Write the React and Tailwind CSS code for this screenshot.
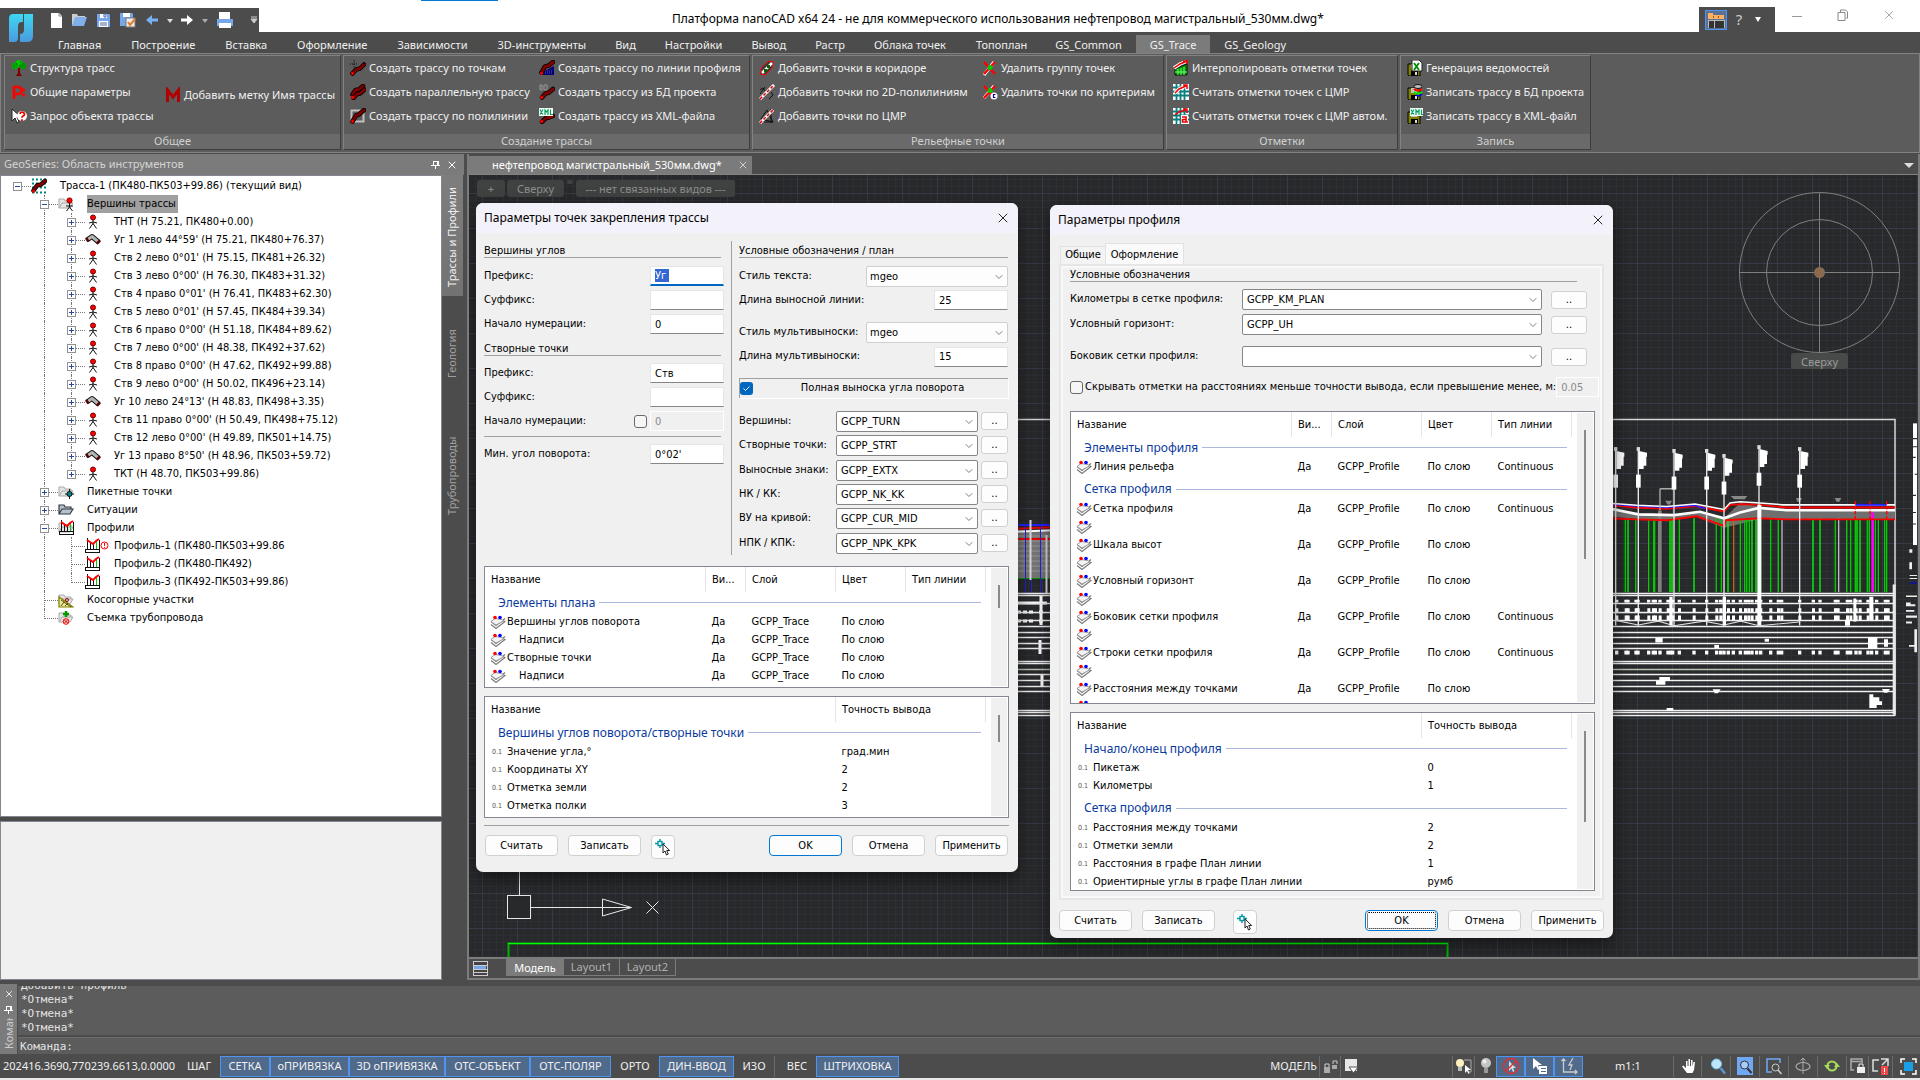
import { useState } from "react";
import { ChevronDown, X } from "lucide-react";

const uiFont = "font-['Noto_Sans','Open_Sans',sans-serif]";
const dlgFont = "font-['DejaVu_Sans_Condensed','Noto_Sans',sans-serif]";

/* ---------- icons ---------- */

function Svg({ w = 16, h = 16, className = "", children, crisp = false }) {
  return (
    <svg
      width={w}
      height={h}
      viewBox={`0 0 ${w} ${h}`}
      className={`shrink-0 ${className}`}
      fill="none"
      shapeRendering={crisp ? "crispEdges" : "auto"}
      aria-hidden="true"
    >
      {children}
    </svg>
  );
}

function Trace({ d = "M2.5 13.5 L6 9 L10 8 L13.5 4", color = "#7c0000" }) {
  return (
    <>
      <path d={d} stroke="#000" strokeWidth="4.5" strokeLinecap="round" strokeLinejoin="round" />
      <path d={d} stroke={color} strokeWidth="3" strokeLinecap="round" strokeLinejoin="round" />
      <circle cx="2.5" cy="13.5" r="1.4" fill="#f00" />
    </>
  );
}

function Floppy() {
  return (
    <>
      <path d="M1 4h12v12H2l-1-1z" fill="#808000" stroke="#000" />
      <rect x="4" y="11" width="7" height="5" fill="#000" />
      <rect x="8" y="12" width="2" height="3" fill="#ddd" />
      <rect x="4" y="4" width="6" height="5" fill="#c0c0c0" />
    </>
  );
}

const ribbonIcons = {
  tree: (
    <>
      <path d="M7 8h2v5l2 3H5l2-3z" fill="#800000" />
      <circle cx="8" cy="3.5" r="3.5" fill="#0c0" />
      <circle cx="4" cy="6" r="3.2" fill="#0a0" />
      <circle cx="12" cy="6" r="3.2" fill="#090" />
      <path d="M5 4h1M9 2h1M11 6h1M3 6h1M8 6h1" stroke="#004d00" />
    </>
  ),
  params: (
    <path d="M3 15V3h4a3 3 0 0 1 0 7H4M12.5 4.500v3M12.5 9.500v3" stroke="#f00" strokeWidth="2.6" />
  ),
  query: (
    <>
      <path d="M1 1v12l3-3 2 5 2-1-2-5h4z" fill="#fff" stroke="#222" />
      <circle cx="11" cy="8" r="5" fill="#fff" />
      <path d="M9 6a2.200 2 0 1 1 3 2c-.8.5-1 .8-1 1.800M11 11.200v1.800" stroke="#e00" strokeWidth="1.800" />
    </>
  ),
  mark: <path d="M2.5 15V3l5.500 7 5.500-7v12" stroke="#b00000" strokeWidth="3" />,
  points: (
    <>
      <Trace d="M2.500 13.500L6 9.500L10 8.500L14 4.500" />
      <path d="M4 0v8M0 4h8" stroke="#111" strokeDasharray="1 1" />
    </>
  ),
  parallel: (
    <>
      <Trace d="M2.500 10.500L5.500 6L9 5.500L13 1.800" />
      <Trace d="M3.500 14L7 10L10 9.500L14.500 5.500" />
    </>
  ),
  poly: (
    <>
      <rect x="1.500" y="2.500" width="12" height="11" stroke="#c0c0c0" strokeWidth="2" />
      <Trace d="M2.500 13.500L6 7.500L9 6.500L14 2" />
    </>
  ),
  line: (
    <>
      <path d="M1 15h14V6L2 13z" fill="#00007a" />
      <path d="M4 11h10M4 13h10" stroke="#55a" strokeDasharray="1 1" />
      <Trace d="M2.500 12.500L6 6.500L10 5.500L14 2" />
    </>
  ),
  db: (
    <>
      <path d="M1 6V1h2v5zM5 6V1h3v5z" stroke="#999" />
      <Trace d="M3 13.500L6.500 9.500L10 8.500L14 5" />
    </>
  ),
  xml: (
    <>
      <Trace d="M3 13.800L7 10L10 9.500L14 8" />
      <rect x="0" y="0" width="14" height="8" fill="#f4fff8" />
      <path d="M1 1.500l3 5M4 1.500l-3 5M6 7V2l1.500 2L9 2v5M11.500 1.500v5H14" stroke="#00a060" strokeWidth="1.200" />
    </>
  ),
  corridor: (
    <>
      <path d="M1 14l2-7 7-6 4 1-1 6-7 7z" fill="#3a3a3a" stroke="#f00" />
      <path d="M3 13L13 3" stroke="#fff" strokeWidth="2.500" />
      <path d="M5 9h3v3H5zM8 5h3v3H8z" fill="#060" />
    </>
  ),
  pline: (
    <>
      <path d="M1 6l3-2 2 3M10 15l4-4-2-3M1 10l5-7" stroke="#111" />
      <path d="M1 15L15 1" stroke="#fff" strokeWidth="3" />
      <path d="M1 15L15 1" stroke="#d00" strokeWidth="1.500" strokeDasharray="3 2" />
    </>
  ),
  dmr: (
    <>
      <path d="M2 11L8 2l6 12zM5 14h9M12 1v14" stroke="#111" />
      <path d="M1 15L14 2" stroke="#fff" strokeWidth="3" />
      <path d="M1 15L14 2" stroke="#d00" strokeWidth="1.500" strokeDasharray="3 2" />
    </>
  ),
  del: (
    <>
      <path d="M2 15L12 2" stroke="#fff" strokeWidth="3" />
      <path d="M2 2l11 12M13 2L2 14" stroke="#f00" strokeWidth="2.400" />
      <circle cx="8" cy="7.500" r="2.500" fill="#0c0" />
    </>
  ),
  delCrit: (
    <>
      <path d="M2 14L12 2" stroke="#fff" strokeWidth="3" />
      <path d="M2 2l11 12M13 2L2 14" stroke="#f00" strokeWidth="2.400" />
      <circle cx="8" cy="6.500" r="2.500" fill="#0c0" />
      <circle cx="12" cy="12" r="3.500" fill="#fff" />
      <path d="M13.500 10.500h-2v3h2" stroke="#00a" strokeWidth="1.200" />
    </>
  ),
  interp: (
    <>
      <path d="M2 15V9l12-5v11z" fill="#009a00" stroke="#111" />
      <path d="M5 9v6M8 8v7M11 7v8M2 12h12" stroke="#7f7" />
      <path d="M1 8l6-4 6-2.500" stroke="#fff" strokeWidth="3.500" />
      <path d="M1 8l6-4 7-3M10 1h4v3" stroke="#e00" strokeWidth="1.500" />
    </>
  ),
  grid: (
    <>
      <rect width="16" height="16" fill="#fff" />
      <path d="M0 3.500h16M0 7.500h16M0 11.500h16M3.500 0v16M7.500 0v16M11.500 0v16" stroke="#088080" strokeWidth="1.800" />
      <path d="M2 9l4-4 7-3M10 1h4v4" stroke="#fff" strokeWidth="3.500" />
      <path d="M2 9l4-4 7-3M10 1h4v4" stroke="#e00" strokeWidth="1.500" />
    </>
  ),
  gridAuto: (
    <>
      <rect width="16" height="16" fill="#fff" />
      <path d="M0 3.500h16M0 7.500h16M0 11.500h16M3.500 0v16M7.500 0v16M11.500 0v16" stroke="#088080" strokeWidth="1.800" />
      <path d="M2 7l4-3 7-2M10 1h4v4" stroke="#e00" strokeWidth="1.500" />
      <rect x="8" y="7" width="7" height="9" fill="#fff" />
      <path d="M9 9h4v5H9.500v-2.500H13M13 14h2" stroke="#e00" strokeWidth="1.600" />
    </>
  ),
  report: (
    <>
      <Floppy />
      <path d="M5 0h7l3 3v8H5z" fill="#fff" stroke="#222" />
      <path d="M7 3l5 7M12 3l-5 7" stroke="#080" strokeWidth="1.800" />
    </>
  ),
  toDb: (
    <>
      <Floppy />
      <ellipse cx="11" cy="2.500" rx="4" ry="2" fill="#c0c0c0" stroke="#111" />
      <path d="M7 5c2 2 6 2 8 0" stroke="#f00" strokeWidth="2" />
      <path d="M7 8c2 2 6 2 8 0" stroke="#0e0" strokeWidth="2" />
      <path d="M9 11c2 1.500 4 1 6-1" stroke="#00f" strokeWidth="1.500" />
    </>
  ),
  toXml: (
    <>
      <Floppy />
      <rect x="3" y="0" width="13" height="8" fill="#f4fff8" />
      <path d="M4 1.500l3 5M7 1.500l-3 5M9 7V2l1.500 2L12 2v5M14.500 1.500v5H16" stroke="#00a060" strokeWidth="1.200" />
    </>
  ),
};

function FolderBase() {
  return <path d="M1 12V3h5l1 2h6v2M1 12l3-5h11l-3 5z" fill="#e4e4e4" stroke="#aaa" />;
}

function ProfileGlyph({ x = 0 }) {
  return (
    <>
      <path d={`M${x + 2.5} 0v11M${x + 5.5} 5v6M${x + 8.5} 6v5`} stroke="#111" />
      <path d={`M${x + 11.5} 3v8`} stroke="#0c0" />
      <path d={`M${x} 11.500h15M${x} 14.500h15M${x + 0.5} 11v4M${x + 14.5} 2v13`} stroke="#111" />
      <path d={`M${x + 2} 2l3 2 3 2 3-3 3-2`} stroke="#f00" strokeWidth="1.800" />
    </>
  );
}

const treeIcons = {
  route: (
    <>
      <path d="M1 1.500h14M1 5.500h14M1 9.500h14M1 14.500h14" stroke="#088" strokeWidth="2" strokeDasharray="2 2" />
      <Trace d="M2.500 12.500L6 7.500L10 6.500L14 3" />
    </>
  ),
  folderPoint: (
    <>
      <FolderBase />
      <path d="M11.500 7v4M8 10h7M11.500 11l-3 4M11.500 11l3 4" stroke="#111" />
      <circle cx="11.500" cy="4.500" r="2.600" fill="#f00" stroke="#800" />
    </>
  ),
  point: (
    <>
      <path d="M8 6v4M4 9l4-1 4 1M8 9.500l-3.500 5M8 9.500l3.500 5" stroke="#111" />
      <circle cx="8" cy="3.500" r="2.500" fill="#f00" stroke="#700" />
    </>
  ),
  bend: (
    <>
      <path d="M2 8L7 4.500L14 10.500" stroke="#111" strokeWidth="5" strokeLinejoin="round" />
      <path d="M2 8L7 4.500L14 10.500" stroke="#b4b4b4" strokeWidth="3" strokeLinejoin="round" />
      <path d="M1 6l2.500 3.500M12 11.500l3-3" stroke="#500" strokeWidth="2.500" />
    </>
  ),
  folderPicket: (
    <>
      <FolderBase />
      <path d="M11.500 5v10M7 10h9" stroke="#111" />
      <circle cx="11.500" cy="10" r="2.500" fill="#088" stroke="#111" />
    </>
  ),
  folderOpen: (
    <path d="M1 12V3h5l1 2h6v2M1 12l3-5h11l-3 5z" fill="#b8c0cc" stroke="#333a45" strokeWidth="1.200" />
  ),
  profiles: (
    <>
      <FolderBase />
      <ProfileGlyph x={1} />
    </>
  ),
  profile: <ProfileGlyph />,
  slope: (
    <>
      <FolderBase />
      <path d="M1 5v10h14z" fill="#e8e8a0" stroke="#808000" strokeWidth="1.200" />
      <path d="M3 8l10 7M3 14l3-4M7 14l3-3" stroke="#550" />
      <circle cx="9" cy="8" r="1.500" stroke="#900" />
    </>
  ),
  survey: (
    <>
      <FolderBase />
      <path d="M8 1v6M5 4h6" stroke="#090" strokeWidth="2.500" />
      <circle cx="8" cy="11.500" r="2.800" stroke="#f00" />
      <path d="M6 9.500l4 4M10 9.500l-4 4" stroke="#f00" />
    </>
  ),
};

function LayersIcon() {
  return (
    <Svg w={16} h={14}>
      <path d="M1 9.500l5 4 9-7-2-1M1 6.500l5 4 9-7" stroke="#777" strokeWidth="1.100" />
      <path d="M1 6.500l4-3 7 1 1.500 1.500L6 10z" fill="#f4f4f4" stroke="#999" />
      <circle cx="5" cy="2.500" r="1.800" fill="#f00" />
      <circle cx="10" cy="2.500" r="1.800" fill="#00f" />
    </Svg>
  );
}

function PickIcon() {
  return (
    <Svg w={18} h={18}>
      <path d="M1 5.500h3M8 5.500h3M6 1v3M6 7v3" stroke="#0097a7" strokeWidth="1.400" />
      <rect x="4" y="3.500" width="4" height="4" stroke="#0097a7" strokeWidth="1.400" />
      <path d="M9 6v9l2-2 1.500 4 1.800-1-1.600-3.500h3z" fill="#fff" stroke="#222" />
    </Svg>
  );
}

/* ---------- title bar and ribbon ---------- */

function TitleBar() {
  return (
    <header className="flex h-8 items-stretch bg-white">
      <div className="flex h-6 w-[259px] shrink-0 items-center self-end bg-[#4c4c4c]">
        <svg width="26" height="30" viewBox="0 0 26 30" className="relative top-2 ml-2 shrink-0" aria-hidden="true">
          <defs>
            <linearGradient id="logo" x1="0" y1="0" x2="0" y2="1">
              <stop offset="0" stopColor="#3fd8f2" />
              <stop offset="1" stopColor="#4a9ade" />
            </linearGradient>
          </defs>
          <path d="M5 1h10v8h-1q-4 0-4 4v12q0 4-4 4H1V6q0-5 4-5z" fill="url(#logo)" />
          <path d="M16 1h9v22q0 6-6 6h-7v-8q4 0 4-4z" fill="url(#logo)" />
        </svg>
        <div className="ml-4 flex items-center gap-2">
          <Svg w={13} h={17}>
            <path d="M1 1h8l3 3v12H1z" fill="#fff" />
            <path d="M9 1v3h3" stroke="#888" />
          </Svg>
          <Svg w={17} h={14}>
            <path d="M1 12V1h5l1 2h7v2" fill="#ccc" />
            <path d="M1 13L4 4h12l-3 9z" fill="#7fb0ea" />
          </Svg>
          <Svg w={15} h={15}>
            <path d="M1 1h12l1 1v12H1z" fill="#77a7ea" />
            <path d="M4 1h7v4H4zM3 8h9v6H3z" fill="#fff" />
            <path d="M8 1h2v3H8zM4 10h7M4 12h7" stroke="#4c6a9a" />
          </Svg>
          <Svg w={17} h={16}>
            <path d="M1 1h12l1 1v12H1z" fill="#77a7ea" />
            <path d="M4 1h7v4H4z" fill="#fff" />
            <rect x="7" y="6" width="9" height="9" fill="#eee" stroke="#777" />
            <path d="M9 10l2 3 5-6" stroke="#e08030" strokeWidth="2" />
          </Svg>
        </div>
        <div className="ml-[10px] flex items-center gap-2">
          <Svg w={13} h={12}>
            <path d="M0 6l6-5v3.500h6v3H6V11z" fill="#77b0f5" />
          </Svg>
          <Svg w={6} h={5}>
            <path d="M0 1h6L3 5z" fill="#ddd" />
          </Svg>
          <Svg w={13} h={12}>
            <path d="M12 6L6 1v3.500H0v3h6V11z" fill="#fff" />
          </Svg>
          <Svg w={6} h={5}>
            <path d="M0 1h6L3 5z" fill="#aaa" />
          </Svg>
          <Svg w={18} h={17}>
            <path d="M3 0h11v7H3z" fill="#fff" />
            <path d="M1 7h16v7H1z" fill="#77a7ea" />
            <path d="M3 11h12v5H3z" fill="#fff" />
          </Svg>
        </div>
        <Svg w={8} h={8} className="mr-px ml-auto">
          <path d="M1 1h6M1 3l3 4 3-4z" stroke="#ccc" fill="#ccc" />
        </Svg>
      </div>
      <div className="flex-1">
        <div className="ml-[162px] h-px w-[77px] bg-[#0078d7]" />
        <h1 className="pt-[8px] pl-[413px] text-[12px] leading-[20px] whitespace-nowrap text-black">
          Платформа nanoCAD x64 24 - не для коммерческого использования нефтепровод магистральный_530мм.dwg*
        </h1>
      </div>
      <div className="mr-[4px] flex h-[25px] w-[76px] items-center self-end bg-[#4c4c4c] pl-[6px]">
        <button className="flex h-5 w-[22px] items-center justify-center border border-[#4f94ee] bg-[#5a7194]" aria-label="Лента">
          <Svg w={18} h={16} crisp>
            <path d="M1 1h5v2H1zM1 3h16v4H1z" fill="#ffb060" />
            <path d="M6 4v2M11 4v2" stroke="#8a5a20" />
            <path d="M1 8h16v8H1z" fill="#333" stroke="#bbb" />
            <path d="M7 8v8" stroke="#bbb" />
          </Svg>
        </button>
        <button className="ml-[6px] w-3 text-[15px] text-[#ccc]">?</button>
        <Svg w={6} h={5} className="ml-[10px]">
          <path d="M0 0h6L3 5z" fill="#fff" />
        </Svg>
      </div>
      <div className="flex w-[141px] items-start justify-between pt-[8px] pr-[24px] pl-[13px] text-[#999]">
        <button className="flex h-4 w-3 items-center" aria-label="Свернуть">
          <span className="h-px w-[10px] bg-[#999]" />
        </button>
        <button className="pt-[1px]" aria-label="Развернуть">
          <Svg w={12} h={12}>
            <path d="M1 3.500h7v8H1zM3.500 3V1h5l2 2v6H9" stroke="#888" />
          </Svg>
        </button>
        <button aria-label="Закрыть">
          <X size={14} strokeWidth={1.5} />
        </button>
      </div>
    </header>
  );
}

const menu = [
  ["Главная", "ml-[43px] px-[15px]"],
  ["Построение", "px-[15px]"],
  ["Вставка", "px-[15px]"],
  ["Оформление", "px-[15px]"],
  ["Зависимости", "px-[15px]"],
  ["3D-инструменты", "px-[15px]"],
  ["Вид", "px-[14px]"],
  ["Настройки", "pl-[15px] pr-[14px]"],
  ["Вывод", "pl-[15px] pr-[14px]"],
  ["Растр", "pl-[15px] pr-[14px]"],
  ["Облака точек", "px-[15px]"],
  ["Топоплан", "pl-[15px] pr-[14px]"],
  ["GS_Common", "px-[14px]"],
  ["GS_Trace", "px-[14px]"],
  ["GS_Geology", "px-[14px]"],
];

function MenuTabs() {
  const [active, setActive] = useState("GS_Trace");
  return (
    <nav className="flex h-[22px] items-end bg-[#4c4c4c]">
      {menu.map(([name, pad]) => (
        <button
          key={name}
          onClick={() => setActive(name)}
          className={`h-[19px] text-[11px] leading-[17px] whitespace-nowrap text-[#f0f0f0] ${pad} ${
            active === name ? "bg-[#7b7b7b]" : ""
          }`}
        >
          {name}
        </button>
      ))}
    </nav>
  );
}

const ribbon = [
  {
    title: "Общее",
    width: "w-[337px]",
    cols: [
      { w: "w-[154px]", items: [["tree", "Структура трасс"], ["params", "Общие параметры"], ["query", "Запрос объекта трассы"]] },
      { w: "flex-1", items: [["mark", "Добавить метку Имя трассы"]], center: true },
    ],
  },
  {
    title: "Создание трассы",
    width: "w-[407px]",
    cols: [
      { w: "w-[189px]", items: [["points", "Создать трассу по точкам"], ["parallel", "Создать параллельную трассу"], ["poly", "Создать трассу по полилинии"]] },
      { w: "flex-1", items: [["line", "Создать трассу по линии профиля"], ["db", "Создать трассу из БД проекта"], ["xml", "Создать трассу из XML-файла"]] },
    ],
  },
  {
    title: "Рельефные точки",
    width: "w-[412px]",
    cols: [
      { w: "w-[223px]", items: [["corridor", "Добавить точки в коридоре"], ["pline", "Добавить точки по 2D-полилиниям"], ["dmr", "Добавить точки по ЦМР"]] },
      { w: "flex-1", items: [["del", "Удалить группу точек"], ["delCrit", "Удалить точки по критериям"]] },
    ],
  },
  {
    title: "Отметки",
    width: "w-[232px]",
    cols: [
      { w: "flex-1", items: [["interp", "Интерполировать отметки точек"], ["grid", "Считать отметки точек с ЦМР"], ["gridAuto", "Считать отметки точек с ЦМР автом."]] },
    ],
  },
  {
    title: "Запись",
    width: "w-[191px]",
    cols: [
      { w: "flex-1", items: [["report", "Генерация ведомостей"], ["toDb", "Записать трассу в БД проекта"], ["toXml", "Записать трассу в XML-файл"]] },
    ],
  },
];

function Ribbon() {
  return (
    <div className="flex h-[100px] gap-[2px] border border-[#828282] bg-[#5c5c5c] px-[3px] pt-[1px]">
      {ribbon.map((g) => (
        <section
          key={g.title}
          className={`flex h-[95px] shrink-0 flex-col border border-t-[#828282] border-r-[#3c3c3c] border-b-[#3c3c3c] border-l-[#828282] ${g.width}`}
        >
          <div className="flex flex-1 pl-[6px]">
            {g.cols.map((c, i) => (
              <div key={i} className={`flex shrink-0 flex-col ${c.w} ${c.center ? "pt-[27px]" : ""}`}>
                {c.items.map(([icon, label]) => (
                  <button key={label} className="flex h-6 items-center gap-[3px] text-[11px] whitespace-nowrap text-[#f0f0f0]">
                    <Svg>{ribbonIcons[icon]}</Svg>
                    {label}
                  </button>
                ))}
              </div>
            ))}
          </div>
          <div className="h-[15px] bg-[#6a6a6a] text-center text-[11px] leading-[14px] text-[#d0d0d0]">{g.title}</div>
        </section>
      ))}
    </div>
  );
}

/* ---------- tree panel ---------- */

// guides: one letter per column, " " empty, "|" line, "+" branch, "L" last branch
const tree = [
  { g: ".", box: "-", icon: "route", text: "Трасса-1 (ПК480-ПК503+99.86) (текущий вид)" },
  { g: " +", box: "-", icon: "folderPoint", text: "Вершины трассы", selected: true },
  { g: " |+", box: "+", icon: "point", text: "ТНТ (H 75.21, ПК480+0.00)" },
  { g: " |+", box: "+", icon: "bend", text: "Уг 1 лево 44°59' (H 75.21, ПК480+76.37)" },
  { g: " |+", box: "+", icon: "point", text: "Ств 2 лево 0°01' (H 75.15, ПК481+26.32)" },
  { g: " |+", box: "+", icon: "point", text: "Ств 3 лево 0°00' (H 76.30, ПК483+31.32)" },
  { g: " |+", box: "+", icon: "point", text: "Ств 4 право 0°01' (H 76.41, ПК483+62.30)" },
  { g: " |+", box: "+", icon: "point", text: "Ств 5 лево 0°01' (H 57.45, ПК484+39.34)" },
  { g: " |+", box: "+", icon: "point", text: "Ств 6 право 0°00' (H 51.18, ПК484+89.62)" },
  { g: " |+", box: "+", icon: "point", text: "Ств 7 лево 0°00' (H 48.38, ПК492+37.62)" },
  { g: " |+", box: "+", icon: "point", text: "Ств 8 право 0°00' (H 47.62, ПК492+99.88)" },
  { g: " |+", box: "+", icon: "point", text: "Ств 9 лево 0°00' (H 50.02, ПК496+23.14)" },
  { g: " |+", box: "+", icon: "bend", text: "Уг 10 лево 24°13' (H 48.83, ПК498+3.35)" },
  { g: " |+", box: "+", icon: "point", text: "Ств 11 право 0°00' (H 50.49, ПК498+75.12)" },
  { g: " |+", box: "+", icon: "point", text: "Ств 12 лево 0°00' (H 49.89, ПК501+14.75)" },
  { g: " |+", box: "+", icon: "bend", text: "Уг 13 право 8°50' (H 48.96, ПК503+59.72)" },
  { g: " |L", box: "+", icon: "point", text: "ТКТ (H 48.70, ПК503+99.86)" },
  { g: " +", box: "+", icon: "folderPicket", text: "Пикетные точки" },
  { g: " +", box: "+", icon: "folderOpen", text: "Ситуации" },
  { g: " +", box: "-", icon: "profiles", text: "Профили" },
  { g: " |+", icon: "profile", text: "Профиль-1 (ПК480-ПК503+99.86", alert: true },
  { g: " |+", icon: "profile", text: "Профиль-2 (ПК480-ПК492)" },
  { g: " |L", icon: "profile", text: "Профиль-3 (ПК492-ПК503+99.86)" },
  { g: " +", icon: "slope", text: "Косогорные участки" },
  { g: " L", icon: "survey", text: "Съемка трубопровода" },
];

function GuideCell({ kind, box }) {
  return (
    <span className="relative h-[18px] w-[27px] shrink-0">
      {(kind === "|" || kind === "+") && (
        <span className="absolute top-0 left-[13px] h-full border-l border-dotted border-[#777]" />
      )}
      {kind === "L" && <span className="absolute top-0 left-[13px] h-[10px] border-l border-dotted border-[#777]" />}
      {kind !== "|" && kind !== " " && (
        <span className="absolute top-[9px] left-[13px] w-[14px] border-t border-dotted border-[#777]" />
      )}
      {box && (
        <span className="absolute top-[5px] left-[9px] flex size-[9px] items-center justify-center border border-[#919191] bg-white">
          <span className="absolute h-px w-[5px] bg-[#274a9a]" />
          {box === "+" && <span className="absolute h-[5px] w-px bg-[#274a9a]" />}
        </span>
      )}
    </span>
  );
}

function TreeRow({ row }) {
  const last = row.g.length - 1;
  return (
    <li className="flex h-[18px] items-center pl-[3px]">
      {[...row.g].map((k, i) => (
        <GuideCell key={i} kind={k} box={i === last ? row.box : null} />
      ))}
      <span className="relative flex w-[29px] shrink-0">
        <Svg>{treeIcons[row.icon]}</Svg>
        {row.alert && (
          <Svg w={9} h={9} className="absolute top-[3px] left-[15px]">
            <circle cx="4.500" cy="4.500" r="3.500" stroke="#f00" />
            <path d="M4.500 2v3M4.500 6v1" stroke="#f00" />
          </Svg>
        )}
      </span>
      <span className={`h-[18px] leading-[18px] whitespace-nowrap ${row.selected ? "bg-[#a0a0a0] pr-[2px]" : ""}`}>
        {row.text}
      </span>
    </li>
  );
}

function PinIcon({ color = "#fff" }) {
  return (
    <Svg w={9} h={9} crisp>
      <path d="M2 1h5v4H2zM6 1v4M0 5h9M4 5v4" stroke={color} strokeWidth="1" />
    </Svg>
  );
}

const sideTabs = [
  ["Трассы и Профили", "h-[121px] pb-[4px] bg-gradient-to-b from-[#727272] to-[#7e7e7e] text-[#eee]"],
  ["Геология", "h-[116px] text-[#a0a0a0]"],
  ["Трубопроводы", "h-[128px] text-[#a0a0a0]"],
];

function ToolPanel() {
  return (
    <aside className="flex w-[464px] shrink-0 flex-col bg-[#4c4c4c]">
      <div className="flex h-[21px] items-center bg-[#7b7b7b] pl-1 text-[11px] text-[#d4d4d4]">
        <span className="flex-1">GeoSeries: Область инструментов</span>
        <PinIcon />
        <button className="mx-[6px] text-white" aria-label="Закрыть панель">
          <X size={12} strokeWidth={2} />
        </button>
      </div>
      <div className="flex flex-1">
        <div className="flex w-[442px] flex-col gap-[4px]">
          <ul className={`flex-1 border border-[#828790] bg-white pt-px text-[11px] text-black ${dlgFont}`}>
            {tree.map((row) => (
              <TreeRow key={row.text} row={row} />
            ))}
          </ul>
          <div className="h-[159px] border border-[#828790] bg-[#f0f0f0]" />
        </div>
        <div className="flex w-[21px] flex-col">
          {sideTabs.map(([t, cls]) => (
            <button
              key={t}
              className={`flex w-[21px] rotate-180 items-center justify-center text-[11px] whitespace-nowrap [writing-mode:vertical-rl] ${cls}`}
            >
              {t}
            </button>
          ))}
        </div>
      </div>
    </aside>
  );
}

/* ---------- drawing ---------- */

const tableLines = [594, 596, 604, 613, 621, 627, 633, 638, 644, 649, 662, 664, 670, 675, 681, 687, 692, 711, 713, 716];
const poles = [
  [47, 785], [115, 785], [222, 790], [320, 790], [372, 803], [477, 780], [599, 785],
];
const greens = [76, 84, 107, 146, 161, 164, 210, 216, 238, 282, 349, 364, 384, 421, 434, 440, 448, 456, 468, 482, 512, 535, 639, 660, 706, 740, 752, 766, 771, 780, 802, 808, 826, 835, 854, 860];
const ticks = [50, 78, 84, 108, 114, 146, 160, 166, 180, 204, 212, 218, 238, 282, 320, 350, 362, 372, 385, 400, 421, 436, 446, 456, 470, 482, 512, 535, 545, 599, 640, 660, 706, 714, 742, 752, 768, 780, 804, 815, 830, 856, 864];

function ProfileDrawing() {
  return (
    <svg x="1131" y="-26" width="320" height="600" viewBox="0 0 960 1568" preserveAspectRatio="none">
      <path d="M20 940L120 955L230 960L290 945L372 965L420 925L480 935L560 945H885V967H480L372 990L290 962L180 972L20 960z" fill="#6f6f6f" />
      {greens.map((x) => (
        <rect key={x} x={x - 2} y="965" width="4" height="193" fill={x % 3 ? "#0c0" : "#00ff00"} />
      ))}
      <rect x="174" y="945" width="11" height="213" fill="#808080" />
      <rect x="399" y="965" width="4" height="193" fill="#b86a10" />
      <rect x="544" y="965" width="4" height="193" fill="#bbb" />
      <rect x="714" y="965" width="4" height="193" fill="#bbb" />
      <rect x="814" y="950" width="8" height="208" fill="#f0f" />
      <path d="M20 965L110 968L200 970L290 960L372 985L378 970L480 965L560 968H885" stroke="#f00" strokeWidth="5" fill="none" />
      <path d="M20 930L110 937L200 940L285 933L372 947L390 930L430 928L480 930L560 937H885" stroke="#f00" strokeWidth="5" fill="none" />
      <path d="M20 928L110 933L200 937L280 931L320 940" stroke="#22f" strokeWidth="4" fill="none" />
      <path d="M20 925L110 931L200 934L285 928L372 942L390 925L420 922L480 925L550 930H885" stroke="#fff" strokeWidth="4" fill="none" />
      <path d="M766 930H860" stroke="#22f" strokeWidth="5" />
      <path d="M20 938L115 955L222 957L300 948L372 965L420 950L477 938L560 944H885" stroke="#fff" strokeWidth="7" fill="none" />
      <path d="M766 920v50M810 920v50M860 920v50" stroke="#f00" strokeWidth="4" strokeDasharray="9 4" />
      <path d="M196 919h20l-6 10h-8zM392 907h50l-8 8h-32zM588 912h18l-6 10h-8zM704 912h20l-6 10h-8z" fill="#888" />
      <path d="M180 888H222M180 888v57" stroke="#aaa" strokeWidth="4" />
      {poles.map(([x, y]) => (
        <g key={x}>
          <rect x={x - 2} y={y} width="4" height={1245 - y} fill="#e8e8e8" />
          <path d={`M${x - 5} ${y - 6}h10v10h-10z`} fill="#ddd" />
          <path d={`M${x + 2} ${y + 4}l24 5v10h-2v24h-8v8h-14z`} fill="#fff" />
          <rect x={x - 7} y={y + 66} width="14" height="34" fill="#fff" />
        </g>
      ))}
      <rect x="472" y="930" width="12" height="315" fill="#fff" />
      {ticks.map((x) => (
        <g key={x} fill="#fff">
          <rect x={x - 5} y="1178" width="10" height="7" />
          <rect x={x - 4} y="1200" width="9" height="10" />
          <rect x={x - 4} y="1219" width="9" height="12" />
          <rect x={x - 5} y="1311" width="10" height="10" />
        </g>
      ))}
      <path d="M47 1232l68 12 60-10 47 12 90-12 60 10 50-10 55 12 120-10" stroke="#ddd" strokeWidth="3" fill="none" />
      <path d="M208 1170h10v75h-10zM368 1170h10v75h-10zM760 1175h9v60h-9zM808 1170h12v60h-12zM166 1278h22v12h-22zM343 1296h14v8h-14zM494 1280h13v8h-13zM804 1276h28v30h-28zM852 1281h12v20h-12zM178 1380h32v10h-14v10h-28v-10h10zM338 1412h24l-8 10h-10zM200 1461h20v8h-20zM808 1425h12v8h18v10h8v10h-16v8h-22zM846 1411h24l-8 10h-10zM735 1230h15v16h-15z" fill="#fff" />
      <rect x="878" y="1138" width="9" height="340" fill="#e8e8e8" />
      <path d="M939 717h12v318h-12z" fill="#fff" />
      <path d="M939 757h12M939 778h12M939 806h8M944 850h8M939 905h9M939 950h9M939 980h9" stroke="#2c2d30" strokeWidth="3" />
      <path d="M928 1046h9v9h-9zM928 1080h8v18h-8zM929 1113h22v3h-22zM929 1121h22v3h-22zM918 1167h33v4h-33zM918 1185h14v5h14v5h-28zM918 1205h25v4h-25zM918 1219h33v6h-33zM918 1235h18v5h-18zM943 1255h8v60h-8zM927 1296h18v5h-18z" fill="#eee" />
      <path d="M928 1134h23" stroke="#11a" strokeWidth="4" />
    </svg>
  );
}

function DrawingCanvas() {
  return (
    <svg className="absolute inset-0 h-full w-full" aria-hidden="true" fill="none">
      <defs>
        <pattern id="minor" width="7" height="7" patternUnits="userSpaceOnUse">
          <path d="M0.500 0v7M0 0.500h7" stroke="#2d2f34" />
        </pattern>
        <pattern id="major" width="35" height="35" x="13" y="18" patternUnits="userSpaceOnUse">
          <rect width="35" height="35" fill="url(#minor)" />
          <path d="M0.500 0v35M0 0.500h35" stroke="#363946" />
        </pattern>
      </defs>
      <rect width="100%" height="100%" fill="#28292b" />
      <rect width="100%" height="100%" fill="url(#major)" />

      {/* view cube */}
      <g stroke="#7f7f7f">
        <circle cx="1350.500" cy="97.500" r="80" />
        <circle cx="1350.500" cy="97.500" r="53" />
        <path d="M1270 97.500h161M1350.500 18v160" />
      </g>
      <circle cx="1350.500" cy="97.500" r="5.500" fill="#8b6b4f" />

      {/* sheet frame and table */}
      <path d="M400 244.500H1426V541" stroke="#d8d8d8" strokeWidth="1.500" />
      <rect x="540" y="355" width="50" height="48" fill="#777" />
      <path d="M540 361h50M540 366h50M540 371h50M540 376h50M540 381h50M540 386h50M540 391h50M540 396h50" stroke="#999" />
      <path d="M540 350h50" stroke="#22f" strokeWidth="2" />
      <path d="M540 354l50-2M540 364h50" stroke="#e00" strokeWidth="2" />
      <path d="M540 357l50-2" stroke="#fff" strokeWidth="2" />
      <path d="M540 403.500h50" stroke="#090" />
      <path d="M556.500 350v68M562.500 403v15M571.500 350v68" stroke="#22d" />
      <path d="M561.500 345v60M577.500 360v58" stroke="#ddd" strokeWidth="2" />
      <path d="M548 428h30M548 437h4M554 437h4M560 437h4M570 437h4M548 446h4M554 446h4M560 446h4M570 446h4M571 465v14M573 500v12M572 420v30" stroke="#fff" strokeWidth="3" />
      {tableLines.map((y) => (
        <path key={y} d={`M400 ${y - 175.5}H1426`} stroke={y === 670 ? "#b8c4b4" : "#f0f0f0"} strokeWidth="1.500" />
      ))}
      <ProfileDrawing />

      {/* coordinate axes */}
      <g stroke="#e8e8e8">
        <path d="M50.500 680v40M62 732.500h100M133.500 724l29 8.500-29 8.500zM177.500 726.500l12 12M189.500 726.500l-12 12" />
        <rect x="38.500" y="720.500" width="23" height="23" fill="#28292b" />
      </g>
      <path d="M39.500 790V768.500H978.500V790" stroke="#00b400" strokeWidth="2" />
      <path d="M39 768.500H979" stroke="#00ff00" />
    </svg>
  );
}

/* ---------- dialog controls ---------- */

function TextField({ id, className = "", focused = false, label, ...rest }) {
  return (
    <input
      id={id}
      aria-label={label}
      className={`h-[20px] border border-[#e6e6e6] px-1 outline-none disabled:bg-[#f0f0f0] disabled:text-[#8a8a8a] ${
        focused ? "border-b-2 border-b-[#0067c0] bg-white" : "border-b-[#868686] bg-white disabled:border-white"
      } ${className}`}
      {...rest}
    />
  );
}

function Combo({ id, value, className = "", soft = false }) {
  return (
    <span className={`relative flex ${className}`}>
      <select
        id={id}
        defaultValue={value}
        className={`h-[21px] w-full appearance-none rounded-[2px] border px-1 leading-[17px] outline-none ${
          soft ? "border-[#cfcfcf] bg-[#fdfdfd] pl-[3px]" : "border-[#868686] bg-white"
        }`}
      >
        <option>{value}</option>
      </select>
      <ChevronDown size={12} strokeWidth={1.5} className="pointer-events-none absolute top-[5px] right-[3px] text-[#555]" />
    </span>
  );
}

function DotsButton({ className = "w-[27px]", label }) {
  return (
    <button aria-label={label} className={`h-[18px] shrink-0 rounded-[3px] border border-[#d0d0d0] bg-[#fdfdfd] leading-[14px] ${className}`}>
      ..
    </button>
  );
}

function PushButton({ children, kind = "" }) {
  const look =
    kind === "default"
      ? "border-[#0078d4]"
      : kind === "focus"
        ? "border-[#0078d4] outline-1 -outline-offset-3 outline-dotted outline-black"
        : "border-[#d0d0d0]";
  return (
    <button className={`h-[21px] w-[73px] rounded-[4px] border bg-[#fdfdfd] leading-[19px] ${look}`}>{children}</button>
  );
}

function DialogButtons({ focus, pickClass = "" }) {
  return (
    <div className="flex items-start gap-[10px]">
      <PushButton>Считать</PushButton>
      <PushButton>Записать</PushButton>
      <button
        aria-label="Указать"
        className={`flex h-6 w-6 items-center justify-center rounded-[4px] border border-[#d0d0d0] bg-[#fdfdfd] ${pickClass}`}
      >
        <PickIcon />
      </button>
      <div className="flex-1" />
      <PushButton kind={focus ? "focus" : "default"}>OK</PushButton>
      <PushButton>Отмена</PushButton>
      <PushButton>Применить</PushButton>
    </div>
  );
}

function DialogFrame({ title, className, children }) {
  return (
    <section
      role="dialog"
      aria-label={title}
      className={`absolute flex flex-col overflow-hidden rounded-[7px] bg-[#f0f0f0] text-[11px] text-black shadow-[0_6px_18px_rgba(0,0,0,0.5)] ${dlgFont} ${className}`}
    >
      <div className="flex h-[30px] shrink-0 items-center bg-[#f3f1f9] pr-[7px] pl-2">
        <h2 className={`flex-1 text-[12px] ${uiFont}`}>{title}</h2>
        <button aria-label="Закрыть">
          <X size={16} strokeWidth={1.25} />
        </button>
      </div>
      {children}
    </section>
  );
}

function Heading({ children }) {
  return <h3 className="h-[13px] border-b border-[#a0a0a0] leading-[12px] whitespace-nowrap">{children}</h3>;
}

const head = "relative h-[25px] pl-[6px] text-left font-normal whitespace-nowrap border-r border-[#e5e5e5]";

function GroupRow({ title, span, first }) {
  return (
    <tr className={first ? "h-[21px]" : "h-[24px]"}>
      <td colSpan={span} className={first ? "p-0" : "p-0 pt-[2px]"}>
        <div className={`flex items-center gap-1 pr-[5px] pl-[13px] text-[12px] leading-[18px] text-[#0b3a9e] ${uiFont}`}>
          <span className="whitespace-nowrap">{title}</span>
          <span className="h-px flex-1 bg-[#aab8dc]" />
        </div>
      </td>
    </tr>
  );
}

function ListBox({ height, thumb, children }) {
  return (
    <div className={`flex overflow-hidden border border-[#828790] bg-white ${height}`}>
      <div className="min-w-0 flex-1">{children}</div>
      <div className="my-px mr-px ml-[5px] flex w-[16px] justify-center bg-[#f0f0f0] pt-[17px]">
        <span className={`w-[2px] bg-[#8a8a8a] ${thumb}`} />
      </div>
    </div>
  );
}

function LayerTable({ groups, cols }) {
  return (
    <table className="w-full table-fixed border-collapse leading-[18px]">
      <colgroup>
        <col />
        {cols.map((c, i) => (
          <col key={i} className={c} />
        ))}
      </colgroup>
      <thead>
        <tr>
          {["Название", "Ви...", "Слой", "Цвет", "Тип линии"].map((h) => (
            <th key={h} className={head}>
              {h}
            </th>
          ))}
        </tr>
      </thead>
      <tbody>
        {groups.map((g, gi) => [
          <GroupRow key={g.title} title={g.title} span={5} first={gi === 0} />,
          ...g.rows.map(([name, layer, type, indent], i) => (
            <tr key={g.title + i} className="h-[18px]">
              <td className="p-0">
                <div className={`flex h-[18px] items-center pl-[5px] whitespace-nowrap ${indent ? "gap-[13px]" : "gap-px"}`}>
                  <LayersIcon />
                  {name}
                </div>
              </td>
              <td className="p-0 pl-[6px]">{layer ? "Да" : ""}</td>
              <td className="p-0 pl-[6px]">{layer}</td>
              <td className="p-0 pl-[6px] whitespace-nowrap">{layer ? "По слою" : ""}</td>
              <td className="p-0 pl-[6px]">{type}</td>
            </tr>
          )),
        ])}
      </tbody>
    </table>
  );
}

function PrecisionTable({ groups, col }) {
  return (
    <table className="w-full table-fixed border-collapse leading-[18px]">
      <colgroup>
        <col />
        <col className={col} />
      </colgroup>
      <thead>
        <tr>
          <th className={head}>Название</th>
          <th className={head}>Точность вывода</th>
        </tr>
      </thead>
      <tbody>
        {groups.map((g, gi) => [
          <GroupRow key={g.title} title={g.title} span={2} first={gi === 0} />,
          ...g.rows.map(([name, value]) => (
            <tr key={name} className="h-[18px]">
              <td className="p-0">
                <div className="flex h-[18px] items-center pl-[7px] whitespace-nowrap">
                  <span className="w-[15px] text-[7px] text-[#555]">0.1</span>
                  {name}
                </div>
              </td>
              <td className="p-0 pl-[6px]">{value}</td>
            </tr>
          )),
        ])}
      </tbody>
    </table>
  );
}

/* ---------- dialogs ---------- */

function Row({ label, id, className, children }) {
  return (
    <div className={`flex items-center ${className}`}>
      <label htmlFor={id} className="flex-1 whitespace-nowrap">
        {label}
      </label>
      {children}
    </div>
  );
}

const signs = [
  ["Вершины:", "GCPP_TURN", ""],
  ["Створные точки:", "GCPP_STRT", ""],
  ["Выносные знаки:", "GCPP_EXTX", "mt-px"],
  ["НК / КК:", "GCPP_NK_KK", ""],
  ["ВУ на кривой:", "GCPP_CUR_MID", ""],
  ["НПК / КПК:", "GCPP_NPK_KPK", "mt-px"],
];

const planGroups = [
  {
    title: "Элементы плана",
    rows: [
      ["Вершины углов поворота", "GCPP_Trace", ""],
      ["Надписи", "GCPP_Trace", "", true],
      ["Створные точки", "GCPP_Trace", ""],
      ["Надписи", "GCPP_Trace", "", true],
    ],
  },
];

const planPrecision = [
  {
    title: "Вершины углов поворота/створные точки",
    rows: [["Значение угла,°", "град.мин"], ["Координаты XY", "2"], ["Отметка земли", "2"], ["Отметка полки", "3"]],
  },
];

function PointsDialog() {
  return (
    <DialogFrame title="Параметры точек закрепления трассы" className="top-[28px] left-[7px] w-[542px]">
      <div className="flex flex-col pt-[8px] pr-[9px] pb-[13px] pl-[8px]">
        <div className="flex h-[314px]">
          <div className="w-[247px] pr-[7px]">
            <div className="mr-[3px] pt-[4px]">
              <Heading>Вершины углов</Heading>
            </div>
            <Row label="Префикс:" id="p1" className="mt-[6px] h-[24px]">
              <TextField id="p1" defaultValue="Уг " focused className="w-[74px]" autoFocus onFocus={(e) => e.target.select()} />
            </Row>
            <Row label="Суффикс:" id="s1" className="h-[24px]">
              <TextField id="s1" className="w-[74px]" />
            </Row>
            <Row label="Начало нумерации:" id="n1" className="h-[24px]">
              <TextField id="n1" defaultValue="0" className="w-[74px]" />
            </Row>
            <div className="mr-[3px] pt-[7px]">
              <Heading>Створные точки</Heading>
            </div>
            <Row label="Префикс:" id="p2" className="mt-[5px] h-[24px]">
              <TextField id="p2" defaultValue="Ств" className="w-[74px]" />
            </Row>
            <Row label="Суффикс:" id="s2" className="h-[24px]">
              <TextField id="s2" className="w-[74px]" />
            </Row>
            <Row label="Начало нумерации:" id="n2" className="h-[24px]">
              <input
                type="checkbox"
                aria-label="Задать начало нумерации"
                className="mr-[3px] size-[13px] appearance-none rounded-[3px] border border-[#6a6a6a] bg-[#f6f6f6]"
              />
              <TextField id="n2" defaultValue="0" disabled className="w-[74px]" />
            </Row>
            <div className="mt-[3px] mr-[3px] h-px bg-[#a0a0a0]" />
            <Row label="Мин. угол поворота:" id="m" className="mt-[5px] h-[24px]">
              <TextField id="m" defaultValue="0°02'" className="w-[74px]" />
            </Row>
          </div>
          <div className="min-w-0 flex-1 border-l border-[#a0a0a0] pt-[4px] pr-px pl-[7px]">
            <Heading>Условные обозначения / план</Heading>
            <Row label="Стиль текста:" id="st" className="mt-[6px] h-[24px]">
              <Combo id="st" value="mgeo" soft className="w-[142px]" />
            </Row>
            <Row label="Длина выносной линии:" id="dl" className="h-[24px]">
              <TextField id="dl" defaultValue="25" className="w-[74px]" />
            </Row>
            <Row label="Стиль мультивыноски:" id="sm" className="mt-[8px] h-[24px]">
              <Combo id="sm" value="mgeo" soft className="w-[142px]" />
            </Row>
            <Row label="Длина мультивыноски:" id="dm" className="h-[25px]">
              <TextField id="dm" defaultValue="15" className="w-[74px]" />
            </Row>
            <label className="mt-[9px] flex h-[20px] items-center border-t border-l border-[#a0a0a0] shadow-[1px_1px_0_#fff]">
              <span className="relative flex">
                <input type="checkbox" defaultChecked className="size-[13px] appearance-none rounded-[3px] bg-[#0067c0]" />
                <Svg w={9} h={9} className="absolute top-[2px] left-[2px]">
                  <path d="M1.500 4.500l2 2 4-4" stroke="#fff" />
                </Svg>
              </span>
              <span className="flex-1 pl-[4px] text-center">Полная выноска угла поворота</span>
            </label>
            <div className="mt-[11px]">
              {signs.map(([label, value, cls]) => (
                <Row key={value} label={label} id={value} className={`h-[24px] ${cls}`}>
                  <Combo id={value} value={value} className="mr-[3px] w-[142px]" />
                  <DotsButton label={`Выбрать: ${label}`} />
                </Row>
              ))}
            </div>
          </div>
        </div>
        <div className="mt-[11px]">
          <ListBox height="h-[122px]" thumb="h-[23px]">
            <LayerTable groups={planGroups} cols={["w-[40px]", "w-[90px]", "w-[70px]", "w-[80px]"]} />
          </ListBox>
        </div>
        <div className="mt-[8px]">
          <ListBox height="h-[122px]" thumb="h-[27px]">
            <PrecisionTable groups={planPrecision} col="w-[150px]" />
          </ListBox>
        </div>
        <div className="mt-[7px] mb-[9px] h-px bg-[#a0a0a0]" />
        <div className="px-px">
          <DialogButtons />
        </div>
      </div>
    </DialogFrame>
  );
}

const profileGroups = [
  { title: "Элементы профиля", rows: [["Линия рельефа", "GCPP_Profile", "Continuous"]] },
  {
    title: "Сетка профиля",
    rows: [
      ["Сетка профиля", "GCPP_Profile", "Continuous"],
      ["", "", ""],
      ["Шкала высот", "GCPP_Profile", ""],
      ["", "", ""],
      ["Условный горизонт", "GCPP_Profile", ""],
      ["", "", ""],
      ["Боковик сетки профиля", "GCPP_Profile", "Continuous"],
      ["", "", ""],
      ["Строки сетки профиля", "GCPP_Profile", "Continuous"],
      ["", "", ""],
      ["Расстояния между точками", "GCPP_Profile", ""],
      ["", "", ""],
    ],
  },
];

const profilePrecision = [
  { title: "Начало/конец профиля", rows: [["Пикетаж", "0"], ["Километры", "1"]] },
  {
    title: "Сетка профиля",
    rows: [
      ["Расстояния между точками", "2"],
      ["Отметки земли", "2"],
      ["Расстояния в графе План линии", "1"],
      ["Ориентирные углы в графе План линии", "румб"],
    ],
  },
];

const profileSigns = [
  ["Километры в сетке профиля:", "GCPP_KM_PLAN", "h-[25px]"],
  ["Условный горизонт:", "GCPP_UH", "h-[25px]"],
  ["Боковик сетки профиля:", "", "mt-[7px] h-[25px]"],
];

function ProfileDialog() {
  return (
    <DialogFrame title="Параметры профиля" className="top-[30px] left-[581px] w-[563px]">
      <div className="flex flex-col px-[9px] pt-[8px] pb-[4px]">
        <div className="flex items-end pl-px" role="tablist">
          <button role="tab" className="h-[18px] w-[45px] border-t border-l border-[#e2e2e2] bg-[#f3f3f3] text-center">
            Общие
          </button>
          <button role="tab" aria-selected="true" className="h-[21px] w-[79px] border border-b-0 border-[#e2e2e2] bg-[#fafafa] text-center leading-[17px]">
            Оформление
          </button>
        </div>
        <div className="border-2 border-[#e6e6e6] pt-[3px] pr-[7px] pb-[7px] pl-[9px] shadow-[inset_0_0_0_2px_#f8f8f8]">
          <div className="mr-[18px]">
            <Heading>Условные обозначения</Heading>
          </div>
          <div className="mt-[5px] mr-[8px]">
            {profileSigns.map(([label, value, cls]) => (
              <Row key={label} label={label} id={label} className={cls}>
                <Combo id={label} value={value} className="mr-[9px] w-[300px]" />
                <DotsButton className="w-[36px]" label={`Выбрать: ${label}`} />
              </Row>
            ))}
          </div>
          <div className="mt-[8px] flex h-[20px] items-center">
            <label className="flex flex-1 items-center gap-[2px] whitespace-nowrap">
              <input type="checkbox" className="size-[13px] appearance-none rounded-[3px] border border-[#6a6a6a] bg-[#f6f6f6]" />
              Скрывать отметки на расстояниях меньше точности вывода, если превышение менее, м:
            </label>
            <TextField label="Превышение" defaultValue="0.05" disabled className="w-[43px]" />
          </div>
          <div className="mt-[14px]">
            <ListBox height="h-[293px]" thumb="h-[129px]">
              <LayerTable groups={profileGroups} cols={["w-[40px]", "w-[90px]", "w-[70px]", "w-[80px]"]} />
            </ListBox>
          </div>
          <div className="mt-[8px]">
            <ListBox height="h-[179px]" thumb="h-[91px]">
              <PrecisionTable groups={profilePrecision} col="w-[150px]" />
            </ListBox>
          </div>
        </div>
        <div className="mt-[10px]">
          <DialogButtons focus pickClass="ml-[8px]" />
        </div>
      </div>
    </DialogFrame>
  );
}

/* ---------- document area ---------- */

function Workspace() {
  return (
    <main className="flex min-w-0 flex-1 flex-col border-x-2 border-[#7b7b7b] bg-[#4c4c4c]">
      <div className="flex h-[21px] items-start border-b border-[#828282] pt-[2px]">
        <div className="flex h-[18px] w-[283px] items-center bg-[#7b7b7b] pl-[23px] text-[11px] text-white">
          <span className="flex-1 whitespace-nowrap">нефтепровод магистральный_530мм.dwg*</span>
          <button className="mr-[3px] text-[#ddd]" aria-label="Закрыть документ">
            <X size={12} strokeWidth={1.75} />
          </button>
        </div>
        <Svg w={10} h={6} className="mt-[7px] mr-[4px] ml-auto">
          <path d="M0 0h10L5 5z" fill="#ddd" />
        </Svg>
      </div>
      <div className="relative flex-1 overflow-hidden">
        <DrawingCanvas />
        <div className="relative flex items-start gap-[2px] pt-[5px] pl-[8px] text-[11px] text-[#8c8c8c]">
          <button className="h-[17px] w-[28px] rounded-[3px] bg-[#404242] leading-[16px]">+</button>
          <button className="h-[17px] w-[57px] rounded-[3px] bg-[#404242] leading-[16px]">Сверху</button>
          <span className="mx-px h-1 w-[6px] rounded-full bg-[#404242]" />
          <button className="h-[17px] w-[159px] rounded-[3px] bg-[#404242] leading-[16px]">--- нет связанных видов ---</button>
        </div>
        <button className="absolute top-[178px] left-[1322px] h-[16px] w-[57px] rounded-[3px] bg-[#484a4a] text-[11px] leading-[15px] text-[#9a9a9a]">
          Сверху
        </button>
        <PointsDialog />
        <ProfileDialog />
      </div>
      <div className="flex h-[23px] items-start border-y-2 border-[#7b7b7b] pl-[3px] text-[11px] text-[#b0b0b0]">
        <Svg w={16} h={17} className="mt-px mr-[18px]" crisp>
          <path d="M1 1h14v14H1z" fill="#444" stroke="#ccc" />
          <path d="M2 5h12v4H2z" fill="#77a7ea" />
          <path d="M1 5h14M1 9h14M1 12h14" stroke="#ccc" />
        </Svg>
        <button className="h-[17px] w-[58px] bg-[#7b7b7b] leading-[14px] text-white">Модель</button>
        <button className="h-[17px] w-[56px] border-r border-b border-[#7b7b7b] leading-[14px]">Layout1</button>
        <button className="h-[17px] w-[56px] border-r border-b border-[#7b7b7b] leading-[14px]">Layout2</button>
      </div>
    </main>
  );
}

/* ---------- command line and status bar ---------- */

function CommandLine() {
  return (
    <div className="flex h-[70px] font-['DejaVu_Sans_Mono',monospace] text-[11px] text-[#e4e4e4]">
      <div className="flex w-[17px] flex-col items-center bg-[#7b7b7b] pt-[5px] text-white">
        <button aria-label="Закрыть">
          <X size={10} strokeWidth={2} />
        </button>
        <div className="mt-[6px]">
          <PinIcon />
        </div>
        <div className={`mt-[4px] h-[31px] rotate-180 overflow-hidden text-[11px] leading-[17px] text-[#ccc] [writing-mode:vertical-rl] ${uiFont}`}>
          Коман
        </div>
      </div>
      <div className="flex flex-1 flex-col gap-[2px] bg-[#4c4c4c] pt-[2px] pl-px">
        <div className="flex h-[50px] flex-col justify-end overflow-hidden bg-[#5c5c5c] pl-[3px] leading-[14px]">
          <p>Добавить профиль</p>
          <p>*Отмена*</p>
          <p>*Отмена*</p>
          <p>*Отмена*</p>
        </div>
        <input
          aria-label="Команда"
          defaultValue="Команда:"
          className="h-[17px] border-t border-[#6c6c6c] bg-[#5c5c5c] pl-[2px] outline-none"
        />
      </div>
    </div>
  );
}

const modes = [
  ["ШАГ", false, "w-[42px] ml-[10px]"],
  ["СЕТКА", true, "w-[50px]"],
  ["оПРИВЯЗКА", true, "w-[79px]"],
  ["3D оПРИВЯЗКА", true, "w-[96px]"],
  ["ОТС-ОБЪЕКТ", true, "w-[85px]"],
  ["ОТС-ПОЛЯР", true, "w-[81px]"],
  ["ОРТО", false, "w-[48px]"],
  ["ДИН-ВВОД", true, "w-[75px]"],
  ["ИЗО", false, "w-[41px] border-r border-r-[#6a6a6a]"],
  ["ВЕС", false, "w-[41px] pl-[3px]"],
  ["ШТРИХОВКА", true, "w-[83px]"],
];

function StatusCell({ children, label, on = false, className = "w-[29px]" }) {
  return (
    <button
      aria-label={label}
      className={`flex h-[21px] shrink-0 items-center justify-center ${
        on ? "border border-[#4f94ee] bg-[#506a8c]" : "border-l border-[#6a6a6a]"
      } ${className}`}
    >
      {children}
    </button>
  );
}

function StatusBar() {
  return (
    <footer className="flex h-[26px] items-center border-b-2 border-[#e8e8e8] bg-[#4c4c4c] text-[11px] text-[#f0f0f0]">
      <span className="w-[168px] pl-[3px] whitespace-nowrap">202416.3690,770239.6613,0.0000</span>
      {modes.map(([m, on, cls]) => (
        <button
          key={m}
          aria-pressed={on}
          className={`h-[21px] shrink-0 whitespace-nowrap ${on ? "border border-[#4f94ee] bg-[#506a8c]" : ""} ${cls}`}
        >
          {m}
        </button>
      ))}
      <span className="ml-auto pr-[2px]">МОДЕЛЬ</span>
      <StatusCell label="Блокировка" className="w-[21px]">
        <Svg w={15} h={15}>
          <path d="M1 8h6v6H1zM9 6h5v4H9z" fill="#aaa" />
          <path d="M2 8V5h4v3M10 5V2h4v3" stroke="#ccc" />
        </Svg>
      </StatusCell>
      <StatusCell label="Лист" className="w-[21px]">
        <Svg w={15} h={16}>
          <path d="M1 1h12v12H1z" fill="#e8e8e8" />
          <path d="M5 9h9l-4.500 6z" fill="#fff" stroke="#555" />
        </Svg>
      </StatusCell>
      <div className="w-[91px]" />
      <StatusCell label="Подсветка" className="w-[22px]">
        <Svg w={17} h={17}>
          <path d="M9 2h7v12h-3" stroke="#aaa" />
          <circle cx="5" cy="5" r="4" fill="#fff0c0" />
          <path d="M3 9h4v4H3z" fill="#bbb" />
          <path d="M10 7v8l2-2 1.500 3 1-1-1.500-3h3z" fill="#fff" />
        </Svg>
      </StatusCell>
      <StatusCell label="Изоляция" className="w-[22px]">
        <Svg w={12} h={18}>
          <circle cx="6" cy="6" r="5" fill="#c4c4c4" />
          <circle cx="4.500" cy="4.500" r="2" fill="#eee" />
          <path d="M4 11h4v5H4z" fill="#999" />
        </Svg>
      </StatusCell>
      <StatusCell on label="Выбор">
        <Svg w={18} h={18}>
          <path d="M7 4v10l2.500-2.500L11 15l1.500-1-1.500-3h3z" fill="#ddd" />
          <circle cx="9" cy="9" r="7.500" stroke="#e03030" strokeWidth="1.500" />
          <path d="M14 4L4 14" stroke="#e03030" strokeWidth="1.500" />
        </Svg>
      </StatusCell>
      <StatusCell on label="Свойства">
        <Svg w={18} h={18}>
          <path d="M2 1v11l3-3 2 4 1.500-1L7 8h4z" fill="#fff" />
          <path d="M8 9h8v8H8z" fill="#fff" />
          <path d="M10 11.500h5M10 14.500h5" stroke="#506a8c" />
        </Svg>
      </StatusCell>
      <StatusCell on label="ПСК">
        <Svg w={18} h={18}>
          <path d="M3.500 2v13H17M1.500 4l2-2 2 2M15 13l2 2-2 2M13 1l-4 7h3l-2 5" stroke="#ccc" strokeWidth="1.300" />
        </Svg>
      </StatusCell>
      <span className="w-[90px] text-center">m1:1</span>
      <StatusCell label="Панорама" className="w-[28px] pl-[4px]">
        <Svg w={18} h={18}>
          <path d="M6 16L1 9.500l1.200-1L5 11V4h1.500v5h1V2H9v7h1V3h1.500v6.500l1-4.500H14l-1 8-1.500 3z" fill="#fff" />
        </Svg>
      </StatusCell>
      <StatusCell label="Масштаб" className="w-[29px] pl-[4px]">
        <Svg w={18} h={18}>
          <circle cx="7.500" cy="7" r="5" fill="#bfe6fb" stroke="#78c0ea" />
          <path d="M11.500 11l4.500 5.500" stroke="#5b93d8" strokeWidth="2.500" />
        </Svg>
      </StatusCell>
      <StatusCell label="Рамка">
        <Svg w={18} h={18}>
          <rect x="1" y="0" width="16" height="18" fill="#6fa8f5" />
          <circle cx="8.500" cy="8" r="4" fill="#a8ccf8" stroke="#333" />
          <path d="M11.500 11.500l4 4.500" stroke="#333" strokeWidth="2" />
        </Svg>
      </StatusCell>
      <StatusCell label="Показать">
        <Svg w={18} h={18}>
          <path d="M7 15H2V2h13v4" stroke="#6fa8f5" strokeWidth="1.500" />
          <circle cx="10.500" cy="10.500" r="3.500" stroke="#ccc" />
          <path d="M13 13l3.500 4" stroke="#ccc" strokeWidth="1.500" />
        </Svg>
      </StatusCell>
      <StatusCell label="Орбита">
        <Svg w={18} h={18}>
          <ellipse cx="9" cy="9.500" rx="7" ry="4" stroke="#aaa" strokeWidth="1.200" />
          <path d="M9 1v16M6.500 3.500L9 1l2.500 2.500" stroke="#aaa" />
        </Svg>
      </StatusCell>
      <StatusCell label="Обновить">
        <Svg w={16} h={16}>
          <circle cx="8" cy="8" r="4.500" stroke="#a6dc5a" strokeWidth="2.200" />
          <path d="M0 7h6L3 11zM16 9h-6l3-4z" fill="#a6dc5a" />
        </Svg>
      </StatusCell>
      <StatusCell label="Окна" className="w-[22px]">
        <Svg w={16} h={16}>
          <path d="M4 12H1V1h11v4M1 3.500h11" stroke="#aaa" strokeWidth="1.500" />
          <path d="M7 9h8v6H7z" fill="#eee" />
          <path d="M9 9V6h4v3" stroke="#eee" />
        </Svg>
      </StatusCell>
      <StatusCell label="Уведомления" className="w-[24px]">
        <Svg w={17} h={17}>
          <path d="M6 13H1V2h6M9 1h7v7M10 7l6-6" stroke="#ddd" strokeWidth="1.500" />
          <path d="M9 8h7v9H9z" fill="#f04848" />
          <path d="M12.500 10v4M12.500 15v1" stroke="#fff" />
        </Svg>
      </StatusCell>
      <StatusCell label="Весь экран" className="w-[28px] pl-[3px]">
        <Svg w={17} h={17}>
          <path d="M1 5V1h4M12 1h4v4M16 12v4h-4M5 16H1v-4" stroke="#fff" strokeWidth="1.500" />
          <rect x="4" y="4" width="9" height="9" fill="#1aa0e8" />
        </Svg>
      </StatusCell>
    </footer>
  );
}

export default function App() {
  return (
    <div className={`flex min-h-screen flex-col bg-[#4c4c4c] ${uiFont}`}>
      <TitleBar />
      <MenuTabs />
      <div className="-mt-px">
        <Ribbon />
      </div>
      <div className="flex flex-1 gap-[3px] pt-[1px] pb-[4px]">
        <ToolPanel />
        <Workspace />
      </div>
      <CommandLine />
      <StatusBar />
    </div>
  );
}
